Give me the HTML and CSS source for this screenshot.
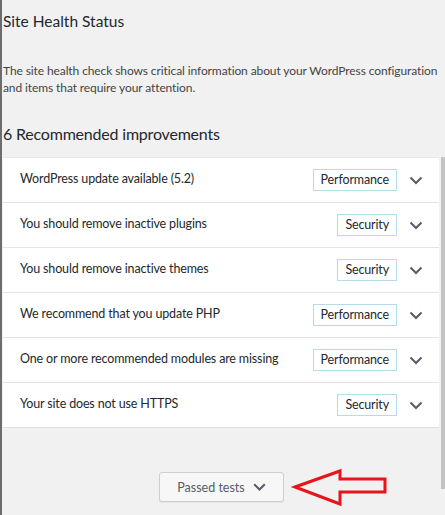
FILE: index.html
```html
<!DOCTYPE html>
<html>
<head>
<meta charset="utf-8">
<link rel="stylesheet" href="styles.css">
</head>
<body>
<div class="frame">
  <h1 class="title">Site Health Status</h1>
  <p class="intro">The site health check shows critical information about your WordPress configuration and items that require your attention.</p>
  <h2 class="count">6 Recommended improvements</h2>
  <div class="panel">
    <div class="row"><span class="label">WordPress update available (5.2)</span><span class="badge">Performance</span><span class="chev"><svg width="14" height="9" viewBox="0 0 14 9"><path d="M1.5 1.5 L7 7 L12.5 1.5" fill="none" stroke="#555d66" stroke-width="2"/></svg></span></div>
    <div class="row"><span class="label">You should remove inactive plugins</span><span class="badge">Security</span><span class="chev"><svg width="14" height="9" viewBox="0 0 14 9"><path d="M1.5 1.5 L7 7 L12.5 1.5" fill="none" stroke="#555d66" stroke-width="2"/></svg></span></div>
    <div class="row"><span class="label">You should remove inactive themes</span><span class="badge">Security</span><span class="chev"><svg width="14" height="9" viewBox="0 0 14 9"><path d="M1.5 1.5 L7 7 L12.5 1.5" fill="none" stroke="#555d66" stroke-width="2"/></svg></span></div>
    <div class="row"><span class="label">We recommend that you update PHP</span><span class="badge">Performance</span><span class="chev"><svg width="14" height="9" viewBox="0 0 14 9"><path d="M1.5 1.5 L7 7 L12.5 1.5" fill="none" stroke="#555d66" stroke-width="2"/></svg></span></div>
    <div class="row"><span class="label">One or more recommended modules are missing</span><span class="badge">Performance</span><span class="chev"><svg width="14" height="9" viewBox="0 0 14 9"><path d="M1.5 1.5 L7 7 L12.5 1.5" fill="none" stroke="#555d66" stroke-width="2"/></svg></span></div>
    <div class="row"><span class="label">Your site does not use HTTPS</span><span class="badge">Security</span><span class="chev"><svg width="14" height="9" viewBox="0 0 14 9"><path d="M1.5 1.5 L7 7 L12.5 1.5" fill="none" stroke="#555d66" stroke-width="2"/></svg></span></div>
  </div>
  <div class="footer">
    <button class="passed">Passed tests <svg width="13" height="8" viewBox="0 0 13 8"><path d="M1.2 1.2 L6.5 6.5 L11.8 1.2" fill="none" stroke="#555d66" stroke-width="2"/></svg></button>
    <svg class="arrow" width="100" height="42" viewBox="0 0 100 42"><path d="M5 20 L50 4 L50 12 L95 12 L95 25 L50 25 L50 37 Z" fill="none" stroke="#e8141c" stroke-width="3" stroke-linejoin="miter"/></svg>
  </div>
  <div class="scrollbar"></div>
  <div class="edgemark"></div>
</div>
</body>
</html>
```
FILE: styles.css
```css
html, body {
  margin: 0;
  padding: 0;
  background: #f1f1f1;
}
body {
  font-family: "Lato", "Open Sans", sans-serif;
  color: #23282d;
}
.frame {
  position: relative;
  width: 445px;
  height: 515px;
  box-sizing: border-box;
  border-left: 2px solid #6d6d6d;
  padding: 0 6px 0 1px;
  overflow: hidden;
}
.title {
  margin: 0;
  padding-top: 10px;
  font-size: 15.5px;
  font-weight: 400;
  line-height: 22px;
  color: #23282d;
}
.intro {
  margin: 30px -2px 0 0;
  font-size: 12px;
  letter-spacing: -0.1px;
  line-height: 17px;
  color: #444;
}
.count {
  margin: 26px 0 0;
  font-size: 16px;
  letter-spacing: -0.2px;
  font-weight: 400;
  line-height: 24px;
  color: #23282d;
}
.panel {
  margin-top: 11px;
  background: #fff;
  border-bottom: 1px solid #e0e0e0;
}
.row {
  display: flex;
  align-items: center;
  height: 44px;
  padding: 0 16px 0 17px;
  border-top: 1px solid #e2e4e7;
}
.row:first-child {
  border-top: 1px solid #e8e8e8;
}
.label {
  flex: 1;
  font-size: 12.5px;
  letter-spacing: -0.15px;
  color: #23282d;
  padding-bottom: 3px;
}
.badge {
  border: 1px solid #b4dcec;
  padding: 2px 7px;
  font-size: 12.5px;
  letter-spacing: -0.15px;
  line-height: 16px;
  color: #23282d;
}
.chev {
  display: flex;
  margin-left: 12px;
}
.footer {
  position: relative;
  display: flex;
  justify-content: center;
  padding-top: 44px;
  padding-right: 0;
}
.passed {
  display: flex;
  align-items: center;
  gap: 8px;
  height: 30px;
  width: 125px;
  justify-content: center;
  margin-left: 1px;
  background: #f7f7f7;
  border: 1px solid #cfcfcf;
  border-radius: 3px;
  font-family: inherit;
  font-size: 12.5px;
  color: #555d66;
  box-shadow: 0 1px 0 #e5e5e5;
}
.arrow {
  position: absolute;
  left: 287px;
  top: 39px;
}
.scrollbar {
  position: absolute;
  right: 0;
  top: 157px;
  width: 4px;
  height: 332px;
  background: #c4c4c4;
}
.edgemark {
  position: absolute;
  left: -2px;
  top: 29px;
  width: 1px;
  height: 14px;
  background: #d8a54a;
}
```
